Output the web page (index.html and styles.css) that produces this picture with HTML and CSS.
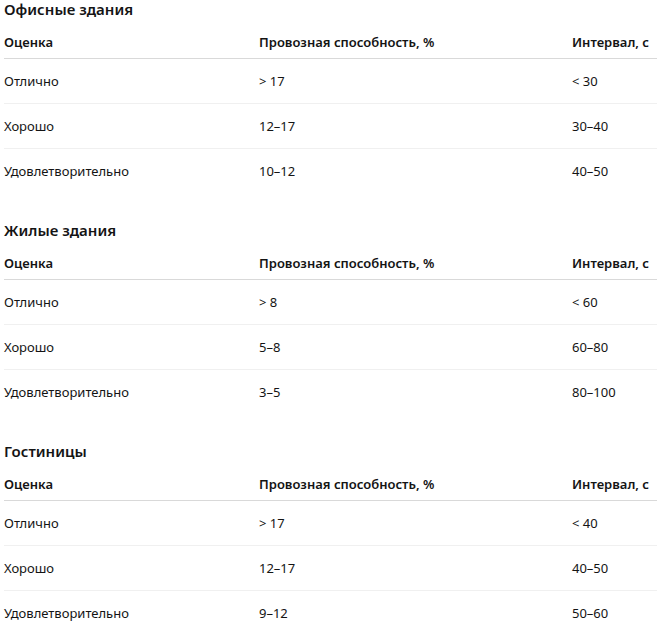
FILE: index.html
```html
<!DOCTYPE html>
<html lang="ru">
<head>
<meta charset="utf-8">
<link rel="stylesheet" href="styles.css">
</head>
<body>
<section class="block">
  <h3 class="title">Офисные здания</h3>
  <table class="grid">
    <colgroup><col class="c1"><col class="c2"><col class="c3"></colgroup>
    <thead><tr><th>Оценка</th><th>Провозная способность, %</th><th>Интервал, с</th></tr></thead>
    <tbody>
      <tr><td>Отлично</td><td>&gt; 17</td><td>&lt; 30</td></tr>
      <tr><td>Хорошо</td><td>12–17</td><td>30–40</td></tr>
      <tr><td>Удовлетворительно</td><td>10–12</td><td>40–50</td></tr>
    </tbody>
  </table>
</section>
<section class="block">
  <h3 class="title">Жилые здания</h3>
  <table class="grid">
    <colgroup><col class="c1"><col class="c2"><col class="c3"></colgroup>
    <thead><tr><th>Оценка</th><th>Провозная способность, %</th><th>Интервал, с</th></tr></thead>
    <tbody>
      <tr><td>Отлично</td><td>&gt; 8</td><td>&lt; 60</td></tr>
      <tr><td>Хорошо</td><td>5–8</td><td>60–80</td></tr>
      <tr><td>Удовлетворительно</td><td>3–5</td><td>80–100</td></tr>
    </tbody>
  </table>
</section>
<section class="block">
  <h3 class="title">Гостиницы</h3>
  <table class="grid">
    <colgroup><col class="c1"><col class="c2"><col class="c3"></colgroup>
    <thead><tr><th>Оценка</th><th>Провозная способность, %</th><th>Интервал, с</th></tr></thead>
    <tbody>
      <tr><td>Отлично</td><td>&gt; 17</td><td>&lt; 40</td></tr>
      <tr><td>Хорошо</td><td>12–17</td><td>40–50</td></tr>
      <tr><td>Удовлетворительно</td><td>9–12</td><td>50–60</td></tr>
    </tbody>
  </table>
</section>
</body>
</html>
```

FILE: styles.css
```css
html, body {
  margin: 0;
  padding: 0;
  background: #ffffff;
}
body {
  padding: 0 1px 0 4px;
  font-family: "Noto Sans", "Open Sans", sans-serif;
  font-size: 13px;
  color: #141414;
}
.block {
  margin-bottom: 27px;
}
.title {
  margin: 0;
  font-size: 15px;
  font-weight: 600;
  line-height: 18px;
  height: 28px;
}
.grid {
  width: 100%;
  border-collapse: collapse;
  table-layout: fixed;
}
.c1 { width: 255px; }
.c2 { width: 313px; }
.c3 { width: auto; }
.grid th {
  text-align: left;
  font-weight: 600;
  padding: 6px 0 7px;
  line-height: 17px;
  height: 17px;
  border-bottom: 1px solid #d9d9d9;
}
.grid td {
  padding: 0;
  height: 44px;
  line-height: 17px;
  vertical-align: middle;
  border-bottom: 1px solid #f0f0f0;
}
.grid tbody tr:last-child td {
  border-bottom: none;
  height: 45px;
}
```
